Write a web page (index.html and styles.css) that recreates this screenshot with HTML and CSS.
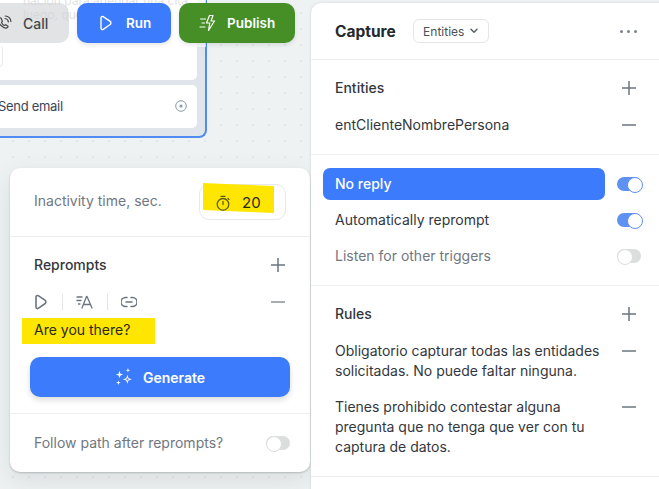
FILE: index.html

```html
<!DOCTYPE html>
<html lang="en">
<head>
  <meta charset="UTF-8">
  <meta name="viewport" content="width=device-width, initial-scale=1.0">
  <title>Capture step</title>
  <link rel="stylesheet" href="styles.css">
</head>
<body>
  <!-- node behind the toolbar -->
  <div class="node">
    <div class="node-card node-card-top">
      <p class="faded-text">nación para agendar una cita.<br>luego, que</p>
      <div class="node-input"></div>
    </div>
    <div class="node-card node-card-email">
      <span>Send email</span>
      <svg class="port" viewBox="0 0 12 12" width="12" height="12"><circle cx="6" cy="6" r="5.3" fill="none" stroke="#8a99ab" stroke-width="1"/><circle cx="6" cy="6" r="1.6" fill="#8a99ab"/></svg>
    </div>
  </div>

  <div class="toolbar-fade"></div>
  <div class="toolbar">
    <button class="btn btn-call">
      <svg viewBox="0 0 16 16" width="16" height="16" fill="none" stroke="#44484d" stroke-width="1.2" stroke-linecap="round" stroke-linejoin="round"><path d="M2 4.2c-.5 1.2.4 3.500 2.600 5.800 2.300 2.300 4.700 3.400 6 2.900.8-.3 1.500-1 1.400-1.700l-2.200-1.500-1.300.8c-1-.4-2.400-1.800-3-3l.9-1.300L5 3c-1-.2-2.600.2-3 1.200z"/><path d="M9 3.500c1.800.2 3.100 1.500 3.400 3.300M9.300 1c3 .2 5.300 2.500 5.600 5.500"/></svg>
      Call
    </button>
    <button class="btn btn-run">
      <svg viewBox="0 0 14 16" width="14" height="16" fill="none" stroke="#fff" stroke-width="1.4" stroke-linejoin="round"><path d="M2 3c0-1.300 1.100-1.900 2.200-1.300l7 4.700c.9.600.9 2.500 0 3.100l-7 4.800C3.100 15 2 14.300 2 13z"/></svg>
      Run
    </button>
    <button class="btn btn-publish">
      <svg viewBox="0 0 18 18" width="18" height="18" fill="none" stroke="#fff" stroke-width="1.2" stroke-linecap="round" stroke-linejoin="round"><path d="M10.500 1.500 7.500 9h3.300l-1.300 7.500 6-9.500h-3.500l2-5.500z"/><path d="M1.500 5h5M3 9h2.500M1 13h5"/></svg>
      Publish
    </button>
  </div>

  <!-- no reply popover -->
  <section class="popover">
    <div class="pop-row pop-timer">
      <span class="muted">Inactivity time, sec.</span>
      <div class="timer-input">
        <div class="marker marker-timer"></div>
        <svg class="timer-icon" viewBox="0 0 16 16" width="16" height="16" fill="none" stroke="#5d5f10" stroke-width="1.3" stroke-linecap="round"><circle cx="8" cy="9.300" r="5.800"/><path d="M6 1.300h4M8 6.500v3M13 3.500l1 .9"/></svg>
        <span class="timer-value">20</span>
      </div>
    </div>
    <div class="pop-reprompts">
      <div class="line-head">
        <span class="label">Reprompts</span>
        <svg class="sym" viewBox="0 0 14 14" width="14" height="14"><path d="M0 7h14M7 0v14" stroke="#6c7480" stroke-width="1.500"/></svg>
      </div>
      <div class="line-tools">
        <svg viewBox="0 0 14 16" width="14" height="16" fill="none" stroke="#6c7480" stroke-width="1.600" stroke-linejoin="round"><path d="M2 3c0-1.300 1.100-1.900 2.200-1.300l7 4.700c.9.600.9 2.500 0 3.100l-7 4.800C3.100 15 2 14.300 2 13z"/></svg>
        <i class="tool-sep"></i>
        <svg viewBox="0 0 17 14" width="17" height="14" fill="none" stroke="#6c7480" stroke-width="1.300" stroke-linecap="round" stroke-linejoin="round"><path d="M1 2h5M1 5.500h4M2.500 9h1.500M6 13 10.500 1.500h.5L16 13M7.500 9.500h7"/></svg>
        <i class="tool-sep"></i>
        <svg viewBox="0 0 16 12" width="16" height="12" fill="none" stroke="#6c7480" stroke-width="1.500" stroke-linecap="round"><path d="M6 1.500H4.500a4.500 4.500 0 0 0 0 9H6M10 1.500h1.500a4.500 4.500 0 0 1 0 9H10M5 6h6"/></svg>
        <svg class="sym" viewBox="0 0 14 2" width="14" height="2"><path d="M0 1h14" stroke="#8b929b" stroke-width="1.500"/></svg>
      </div>
      <div class="prompt-line">
        <div class="marker marker-prompt"></div>
        <span class="prompt-text">Are you there?</span>
      </div>
      <button class="btn-generate">
        <svg viewBox="0 0 16 16" width="18" height="18" fill="#fff"><path d="M4 2.500 4.800 5l2.400.8-2.400.8L4 9l-.8-2.400L.8 5.800 3.200 5zM11.500 0l.5 1.500 1.500.5-1.500.5-.5 1.500-.5-1.500L9.500 2l1.500-.5zM3 11l.5 1.500L5 13l-1.500.5L3 15l-.5-1.500L1 13l1.500-.5z"/><path fill-rule="evenodd" d="M11 6l1 3 3 1-3 1-1 3-1-3-3-1 3-1zm0 2.400-.4 1.200-1.200.4 1.200.4.400 1.200.4-1.200 1.200-.4-1.200-.4z"/></svg>
        Generate
      </button>
    </div>
    <div class="pop-row pop-follow">
      <span class="muted">Follow path after reprompts?</span>
      <span class="toggle"></span>
    </div>
  </section>

  <!-- right editor panel -->
  <aside class="panel">
    <header class="panel-head">
      <h2>Capture</h2>
      <div class="select">Entities
        <svg viewBox="0 0 8 6" width="8" height="6" fill="none" stroke="#5b6068" stroke-width="1.500" stroke-linecap="round" stroke-linejoin="round"><path d="M1 1.200 4 4.200 7 1.200"/></svg>
      </div>
      <span class="dots"><i></i><i></i><i></i></span>
    </header>

    <div class="panel-section">
      <div class="line-head">
        <span class="label">Entities</span>
        <svg class="sym" viewBox="0 0 14 14" width="14" height="14"><path d="M0 7h14M7 0v14" stroke="#6c7480" stroke-width="1.500"/></svg>
      </div>
      <div class="line-head">
        <span class="item">entClienteNombrePersona</span>
        <svg class="sym" viewBox="0 0 14 2" width="14" height="2"><path d="M0 1h14" stroke="#6c7480" stroke-width="1.500"/></svg>
      </div>
    </div>

    <div class="panel-section section-toggles">
      <div class="toggle-row">
        <span class="toggle-name selected">No reply</span>
        <span class="toggle toggle-on"></span>
      </div>
      <div class="toggle-row">
        <span class="toggle-name">Automatically reprompt</span>
        <span class="toggle toggle-on"></span>
      </div>
      <div class="toggle-row">
        <span class="toggle-name muted">Listen for other triggers</span>
        <span class="toggle"></span>
      </div>
    </div>

    <div class="panel-section section-rules">
      <div class="line-head">
        <span class="label">Rules</span>
        <svg class="sym" viewBox="0 0 14 14" width="14" height="14"><path d="M0 7h14M7 0v14" stroke="#6c7480" stroke-width="1.500"/></svg>
      </div>
      <div class="rule">
        <p>Obligatorio capturar todas las entidades solicitadas. No puede faltar ninguna.</p>
        <svg class="sym" viewBox="0 0 14 2" width="14" height="2"><path d="M0 1h14" stroke="#6c7480" stroke-width="1.500"/></svg>
      </div>
      <div class="rule">
        <p>Tienes prohibido contestar alguna pregunta que no tenga que ver con tu captura de datos.</p>
        <svg class="sym" viewBox="0 0 14 2" width="14" height="2"><path d="M0 1h14" stroke="#6c7480" stroke-width="1.500"/></svg>
      </div>
    </div>
  </aside>
</body>
</html>
```

FILE: styles.css

```css
* {
  box-sizing: border-box;
}
html, body {
  height: 100%;
}
body {
  margin: 0;
  overflow: hidden;
  position: relative;
  font-family: Inter, "Liberation Sans", sans-serif;
  font-size: 14px;
  color: #33373d;
  background-color: #eef2f3;
  background-image: radial-gradient(circle at 13px 13px, #e1e6e8 1px, transparent 1.300px);
  background-size: 16px 16px;
}
p {
  margin: 0;
}
button {
  font-family: inherit;
  border: none;
}

/* canvas node */
.node {
  position: absolute;
  left: -60px;
  top: -40px;
  width: 267px;
  height: 178px;
  padding: 8px 8px 8px 0;
  display: flex;
  flex-direction: column;
  gap: 5px;
  background: #dfe5eb;
  border: 1px solid #4f8bf0;
  border-width: 0 2px 2px 0;
  border-radius: 0 0 8px 0;
}
.node-card {
  background: #fff;
  border-radius: 0 0 5px 0;
}
.node-card-top {
  height: 113px;
  position: relative;
}
.faded-text {
  position: absolute;
  top: 26px;
  left: 83px;
  white-space: nowrap;
  color: #8f959b;
  font-size: 12px;
  line-height: 14px;
}
.node-input {
  position: absolute;
  left: 0;
  top: 77px;
  width: 63px;
  height: 22px;
  border: 1px solid #e6e9ec;
  border-radius: 4px;
}
.node-card-email {
  height: 43px;
  padding: 0 10px 1px 58px;
  display: flex;
  align-items: center;
  justify-content: space-between;
  font-size: 13px;
  letter-spacing: -0.3px;
  color: #3b4558;
  border-radius: 5px 5px 5px 0;
}

/* toolbar */
.toolbar-fade {
  position: absolute;
  left: 0;
  top: 0;
  width: 206px;
  height: 47px;
  background: rgba(255, 255, 255, 0.72);
}
.toolbar {
  position: absolute;
  left: -30px;
  top: 3px;
  display: flex;
  gap: 8px;
}
.btn {
  height: 40px;
  border-radius: 10px;
  display: flex;
  align-items: center;
  font-size: 13.500px;
  font-weight: 600;
  color: #fff;
  box-shadow: 0 2px 4px rgba(0, 0, 0, 0.1);
}
.btn-call {
  width: 99px;
  padding-left: 26px;
  gap: 11px;
  font-size: 14px;
  font-weight: 500;
  color: #44484d;
  background: rgba(205, 208, 210, 0.6);
  box-shadow: none;
}
.btn-run {
  width: 94px;
  padding-left: 22px;
  gap: 13px;
  background: #3c7bfb;
}
.btn-publish {
  width: 116px;
  padding-left: 20px;
  gap: 10px;
  background: #468f27;
}

/* popover */
.popover {
  position: absolute;
  left: 10px;
  top: 168px;
  width: 300px;
  height: 304px;
  background: #fff;
  border-radius: 10px;
  box-shadow: 0 1px 2px rgba(0, 0, 0, 0.2), 0 8px 24px rgba(60, 70, 80, 0.12);
  display: flex;
  flex-direction: column;
}
.pop-row {
  display: flex;
  align-items: center;
  justify-content: space-between;
  padding: 0 20px 0 24px;
}
.pop-timer {
  height: 69px;
  padding-right: 24px;
  border-bottom: 1px solid #eceeef;
}
.pop-timer > .muted {
  padding-bottom: 4px;
}
.pop-follow > .muted {
  padding-bottom: 2px;
}
.muted {
  color: #71777f;
}
.timer-input {
  position: relative;
  width: 87px;
  height: 36px;
  border: 1px solid #e6e8ea;
  border-radius: 10px;
  display: flex;
  align-items: center;
  padding-left: 15px;
  gap: 11px;
}
.marker {
  position: absolute;
  background: #ffe600;
}
.marker-timer {
  left: 3px;
  top: -2px;
  width: 71px;
  height: 30px;
  clip-path: polygon(0 0, 100% 10%, 100% 100%, 0 90%);
}
.timer-icon {
  position: relative;
  margin-top: 1px;
}
.timer-value {
  position: relative;
  font-size: 15px;
  color: #2a2a1a;
}
.pop-reprompts {
  padding: 18px 25px 16px 24px;
  border-bottom: 1px solid #eceeef;
  height: 177px;
}
.line-head {
  height: 20px;
  display: flex;
  align-items: center;
  justify-content: space-between;
}
.label,
.item {
  padding-bottom: 2px;
}
.label {
  font-weight: 500;
}
.line-tools {
  margin-top: 17px;
  height: 20px;
  display: flex;
  align-items: center;
  gap: 13.500px;
}
.line-tools .sym {
  margin-left: auto;
}
.tool-sep {
  width: 1px;
  height: 16px;
  background: #e3e5e7;
}
.prompt-line {
  position: relative;
  height: 26px;
  margin: 6px 0 13px;
  display: flex;
  align-items: center;
}
.marker-prompt {
  left: -12px;
  top: 0;
  width: 133px;
  height: 26px;
}
.prompt-text {
  position: relative;
  padding-bottom: 3px;
  color: #2a2a1a;
}
.btn-generate {
  width: 260px;
  height: 40px;
  margin-left: -4px;
  border-radius: 10px;
  background: #3c7bfb;
  color: #fff;
  font-size: 14px;
  font-weight: 600;
  display: flex;
  align-items: center;
  justify-content: center;
  gap: 10px;
  box-shadow: 0 3px 6px rgba(0, 0, 0, 0.14);
}
.pop-follow {
  flex: 1;
}
.toggle {
  position: relative;
  flex: none;
  width: 24px;
  height: 14px;
  border-radius: 7px;
  background: #dcdddd;
}
.toggle::after {
  content: "";
  position: absolute;
  left: 0;
  top: 0;
  width: 14px;
  height: 14px;
  border-radius: 50%;
  background: #fff;
  border: 1px solid #dcdddd;
}
.toggle-on {
  background: #5f91f3;
}
.toggle-on::after {
  left: 10px;
  border-color: #5f91f3;
}

/* right panel */
.panel {
  position: absolute;
  left: 311px;
  top: 3px;
  width: 360px;
  height: 500px;
  background: #fff;
  border-radius: 10px 10px 0 0;
  box-shadow: 0 0 3px rgba(0, 0, 0, 0.12);
}
.panel-head {
  height: 57px;
  padding: 0 30px 0 24px;
  display: flex;
  align-items: center;
  border-bottom: 1px solid #eceeef;
}
.panel-head h2 {
  margin: 0;
  font-size: 15.500px;
  font-weight: 700;
  color: #25282c;
}
.select {
  margin-left: 17px;
  width: 76px;
  height: 24px;
  border: 1px solid #e3e5e7;
  border-radius: 6px;
  display: flex;
  align-items: center;
  justify-content: center;
  gap: 6px;
  font-size: 12px;
  color: #4c5157;
}
.dots {
  margin-left: auto;
  display: flex;
  gap: 4px;
  margin-right: 4px;
}
.dots i {
  width: 3px;
  height: 3px;
  border-radius: 50%;
  background: #7d848d;
}
.panel-section {
  width: 348px;
  padding: 18px 23px 19px 24px;
  display: flex;
  flex-direction: column;
  gap: 17px;
  border-bottom: 1px solid #eceeef;
}
.section-toggles {
  padding: 13px 18px 13px 12px;
  gap: 4px;
}
.toggle-row {
  height: 32px;
  display: flex;
  align-items: center;
  justify-content: space-between;
}
.toggle-name {
  width: 282px;
  height: 32px;
  padding: 0 0 2px 12px;
  display: flex;
  align-items: center;
  border-radius: 7px;
}
.selected {
  background: #3c7bfb;
  color: #fff;
  font-weight: 500;
}
.rule {
  display: flex;
  align-items: flex-start;
  justify-content: space-between;
  line-height: 20px;
}
.rule + .rule {
  margin-top: -1px;
}
.rule p {
  width: 275px;
}
.rule .sym {
  margin-top: 9px;
}
```
